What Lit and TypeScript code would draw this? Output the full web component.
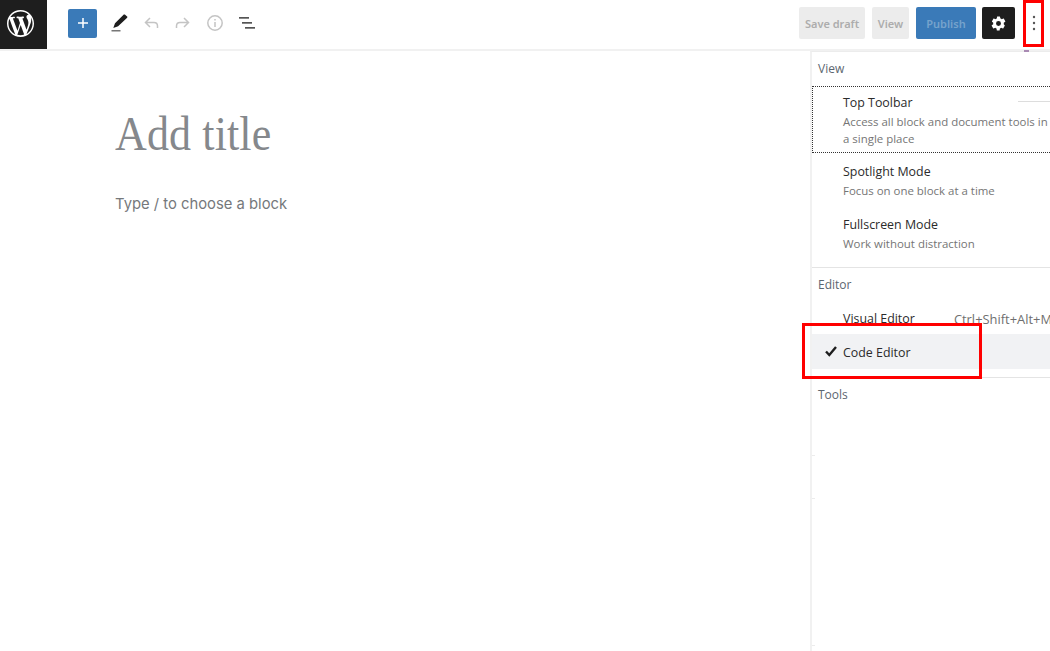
import { LitElement, html, css } from "lit";
import { customElement } from "lit/decorators.js";

@customElement("app-root")
export class AppRoot extends LitElement {
  static styles = css`
    :host { display: block; position: relative; width: 1050px; height: 651px; overflow: hidden; background: #fff; font-family: "Open Sans", sans-serif; color: #1e1e1e; }
    * { box-sizing: border-box; }
    header { height: 51px; display: flex; align-items: flex-start; border-bottom: 2px solid #f1f1f1; }
    .logo { width: 47px; height: 49px; background: #1e1e1e; display: flex; align-items: center; justify-content: center; flex: none; padding: 0 6px 3px 0; }
    .tools { display: flex; align-items: center; height: 46px; padding-left: 21px; flex: 1; }
    .add { width: 29px; height: 29px; border-radius: 2px; background: #3a7ab8; display: flex; align-items: center; justify-content: center; margin-right: 6px; }
    .tool { width: 32px; height: 32px; display: flex; align-items: center; justify-content: center; }
    .actions { display: flex; align-items: center; height: 46px; padding-right: 1px; font-family: "Noto Sans", "Open Sans", sans-serif; font-size: 11px; font-weight: 600; }
    .btn { height: 32px; border-radius: 2px; display: flex; align-items: center; justify-content: center; background: #ececec; color: #adadad; }
    .draft { width: 66px; margin-right: 7px; }
    .view { width: 37px; margin-right: 7px; }
    .publish { width: 60px; margin-right: 6px; background: #3a7ab8; color: #76a3cc; }
    .gear { width: 33px; background: #1e1e1e; margin-right: 4px; }
    .dots { width: 30px; height: 32px; display: flex; align-items: center; justify-content: center; }
    main { display: flex; height: 600px; }
    .editor { flex: 1; padding: 55px 0 0 115px; }
    .title { font-family: "Liberation Serif", serif; font-size: 48.5px; line-height: 56px; color: #85888c; letter-spacing: 0.15px; font-weight: 400; margin: 0; transform: scaleX(0.907); transform-origin: left center; }
    .para { font-family: Inter, sans-serif; font-size: 14.8px; font-weight: 400; line-height: 24px; color: #75787b; margin: 30px 0 0; }
    .panel { width: 240px; flex: none; border-left: 2px solid #f1f1f1; border-top: 1px solid #ececec; font-size: 12px; position: relative; }
    .group { border-bottom: 1px solid #e4e4e4; padding-bottom: 8px; }
    .group.first { padding-bottom: 4px; }
    .group.last { border-bottom: 0; }
    .label { padding: 8px 0 0 6px; height: 35px; font-size: 12px; line-height: 18px; color: #5c6670; }
    .first .label { height: 34px; }
    .item { padding: 6px 0 6px 31px; position: relative; }
    .item.focus { outline: 1px dotted #333; outline-offset: -1px; margin-right: -4px; height: 67px; padding-top: 8px; margin-bottom: 4px; }
    .name { font-size: 12.4px; line-height: 18px; color: #2b2b2b; display: flex; white-space: nowrap; }
    .desc { font-size: 11.45px; line-height: 17px; color: #757575; margin-top: 1px; }
    .focus .desc { width: 207px; }
    .rule { position: absolute; right: 0; top: 15px; width: 36px; height: 1px; background: #ddd; }
    .short { position: absolute; right: -2px; top: 7px; color: #6f6f6f; font-size: 12.9px; line-height: 18px; white-space: nowrap; }
    .tick { position: absolute; left: 12px; top: 10px; }
    .selected { background: #f1f2f4; height: 35px; padding-top: 10px; }
    .plain { height: 31px; padding-top: 7px; }
    .spot { height: 53px; }
    .notch { position: absolute; left: 0; width: 3px; height: 1px; background: #ececec; }
    .pin { position: absolute; left: 1024px; top: 50px; width: 5px; height: 2px; background: #a98ab3; }
    .box { position: absolute; border: 3px solid #f00; pointer-events: none; }
    .b1 { left: 1023px; top: 0; width: 21px; height: 47px; }
    .b2 { left: 802px; top: 323px; width: 180px; height: 56px; }
  `;

  render() {
    return html`
      <header>
        <div class="logo">
          <svg width="27" height="27" viewBox="0 0 20 20" fill="#fff"><path d="M20 10c0-5.51-4.49-10-10-10C4.480 0 0 4.490 0 10c0 5.520 4.480 10 10 10 5.510 0 10-4.480 10-10zM7.780 15.370L4.370 6.220c.55-.02 1.170-.08 1.170-.08.50-.06.440-1.130-.06-1.110 0 0-1.450.11-2.370.11-.18 0-.37 0-.58-.01C4.120 2.690 6.870 1.110 10 1.110c2.330 0 4.450.87 6.050 2.340-.68-.11-1.650.39-1.650 1.580 0 .74.45 1.360.90 2.100.35.610.55 1.360.55 2.460 0 1.490-1.400 5-1.400 5l-3.030-8.370c.54-.02.82-.17.82-.17.50-.05.44-1.250-.06-1.220 0 0-1.440.12-2.380.12-.87 0-2.330-.12-2.330-.12-.50-.03-.560 1.200-.06 1.220l.92.080 1.260 3.410zM17.410 10c.24-.64.740-1.870.43-4.250.70 1.290 1.050 2.710 1.050 4.250 0 3.290-1.730 6.240-4.400 7.780.97-2.590 1.940-5.200 2.920-7.780zM6.100 18.090C3.120 16.650 1.110 13.530 1.110 10c0-1.300.23-2.480.72-3.580C3.250 10.320 4.670 14.210 6.100 18.090zm4.030-6.980l2.580 6.980c.01.04.03.08.05.110-.87.310-1.800.49-2.760.49-.810 0-1.600-.12-2.340-.34z"/></svg>
        </div>
        <div class="tools">
          <div class="add"><svg width="14" height="14" viewBox="0 0 14 14"><path d="M7 2v10M2 7h10" stroke="#fff" stroke-width="1.500"/></svg></div>
          <div class="tool"><svg width="24" height="24" viewBox="0 0 24 24" fill="#1e1e1e"><path d="M20.100 5.600L18.400 3.900c-.6-.6-1.500-.6-2.100 0L8 12.200 6.300 17l4.800-1.700 8.800-8.400c.6-.5.7-.8.2-1.300z"/><rect x="4.500" y="19" width="9" height="1.500" fill="#777"/></svg></div>
          <div class="tool"><svg width="24" height="24" viewBox="0 0 24 24" fill="none" stroke="#c4c4c4" stroke-width="1.500"><path d="M11 7L6.500 11.500 11 16M6.500 11.500H15c2 0 3.500 1.500 3.500 3.500v2"/></svg></div>
          <div class="tool"><svg width="24" height="24" viewBox="0 0 24 24" fill="none" stroke="#c4c4c4" stroke-width="1.500"><path d="M13 7l4.500 4.500L13 16M17.500 11.500H9c-2 0-3.500 1.500-3.500 3.500v2"/></svg></div>
          <div class="tool"><svg width="24" height="24" viewBox="0 0 24 24" fill="none" stroke="#c4c4c4" stroke-width="1.500"><circle cx="12" cy="12" r="7.200"/><path d="M12 11v5M12 8v1.600"/></svg></div>
          <div class="tool"><svg width="24" height="24" viewBox="0 0 24 24" fill="#555"><rect x="4" y="6" width="10" height="1.700"/><rect x="7" y="11" width="10" height="1.700"/><rect x="10" y="16" width="10" height="1.700"/></svg></div>
        </div>
        <div class="actions">
          <div class="btn draft">Save draft</div>
          <div class="btn view">View</div>
          <div class="btn publish">Publish</div>
          <div class="btn gear"><svg width="17" height="17" viewBox="0 0 24 24" fill="#fff"><path fill-rule="evenodd" d="M19.400 13c.1-.3.100-.7.100-1s0-.7-.1-1l2.100-1.600c.2-.1.200-.4.100-.6l-2-3.500c-.1-.2-.4-.3-.6-.2l-2.500 1c-.5-.4-1.100-.7-1.700-1L14 2.400c0-.2-.2-.4-.5-.4h-3c-.3 0-.5.200-.5.400l-.4 2.700c-.6.200-1.200.6-1.700 1l-2.500-1c-.2-.1-.5 0-.6.200l-2 3.500c-.1.200-.1.500.1.600L4.600 11c-.1.300-.1.700-.1 1s0 .7.100 1l-2.100 1.600c-.2.100-.2.400-.1.600l2 3.500c.1.200.4.300.6.200l2.500-1c.5.400 1.100.7 1.700 1l.4 2.700c0 .2.200.4.500.4h3c.3 0 .5-.2.500-.4l.4-2.700c.6-.2 1.200-.6 1.700-1l2.500 1c.2.100.5 0 .6-.2l2-3.500c.1-.2.100-.5-.1-.6zM12 15.500a3.500 3.500 0 110-7 3.500 3.500 0 010 7z"/></svg></div>
          <div class="dots"><svg width="4" height="16" viewBox="0 0 4 16" fill="#555"><circle cx="2" cy="2" r="1.200"/><circle cx="2" cy="8" r="1.200"/><circle cx="2" cy="14" r="1.200"/></svg></div>
        </div>
      </header>
      <main>
        <div class="editor">
          <h1 class="title">Add title</h1>
          <p class="para">Type / to choose a block</p>
        </div>
        <div class="panel">
          <div class="group first">
            <div class="label">View</div>
            <div class="item focus">
              <div class="name">Top Toolbar</div>
              <div class="rule"></div>
              <div class="desc">Access all block and document tools in a single place</div>
            </div>
            <div class="item spot">
              <div class="name">Spotlight Mode</div>
              <div class="desc">Focus on one block at a time</div>
            </div>
            <div class="item spot">
              <div class="name">Fullscreen Mode</div>
              <div class="desc">Work without distraction</div>
            </div>
          </div>
          <div class="group">
            <div class="label">Editor</div>
            <div class="item plain"><div class="name">Visual Editor</div><div class="short">Ctrl+Shift+Alt+M</div></div>
            <div class="item selected">
              <svg class="tick" width="14" height="14" viewBox="0 0 14 14"><path d="M2 7.500L5.300 11 12 3" fill="none" stroke="#1e1e1e" stroke-width="2.400"/></svg>
              <div class="name">Code Editor</div>
            </div>
          </div>
          <div class="group last"><div class="label">Tools</div></div>
          <div class="notch" style="top: 403px"></div>
          <div class="notch" style="top: 446px"></div>
          <div class="notch" style="top: 593px"></div>
        </div>
      </main>
      <div class="pin"></div>
      <div class="box b1"></div>
      <div class="box b2"></div>
    `;
  }
}
